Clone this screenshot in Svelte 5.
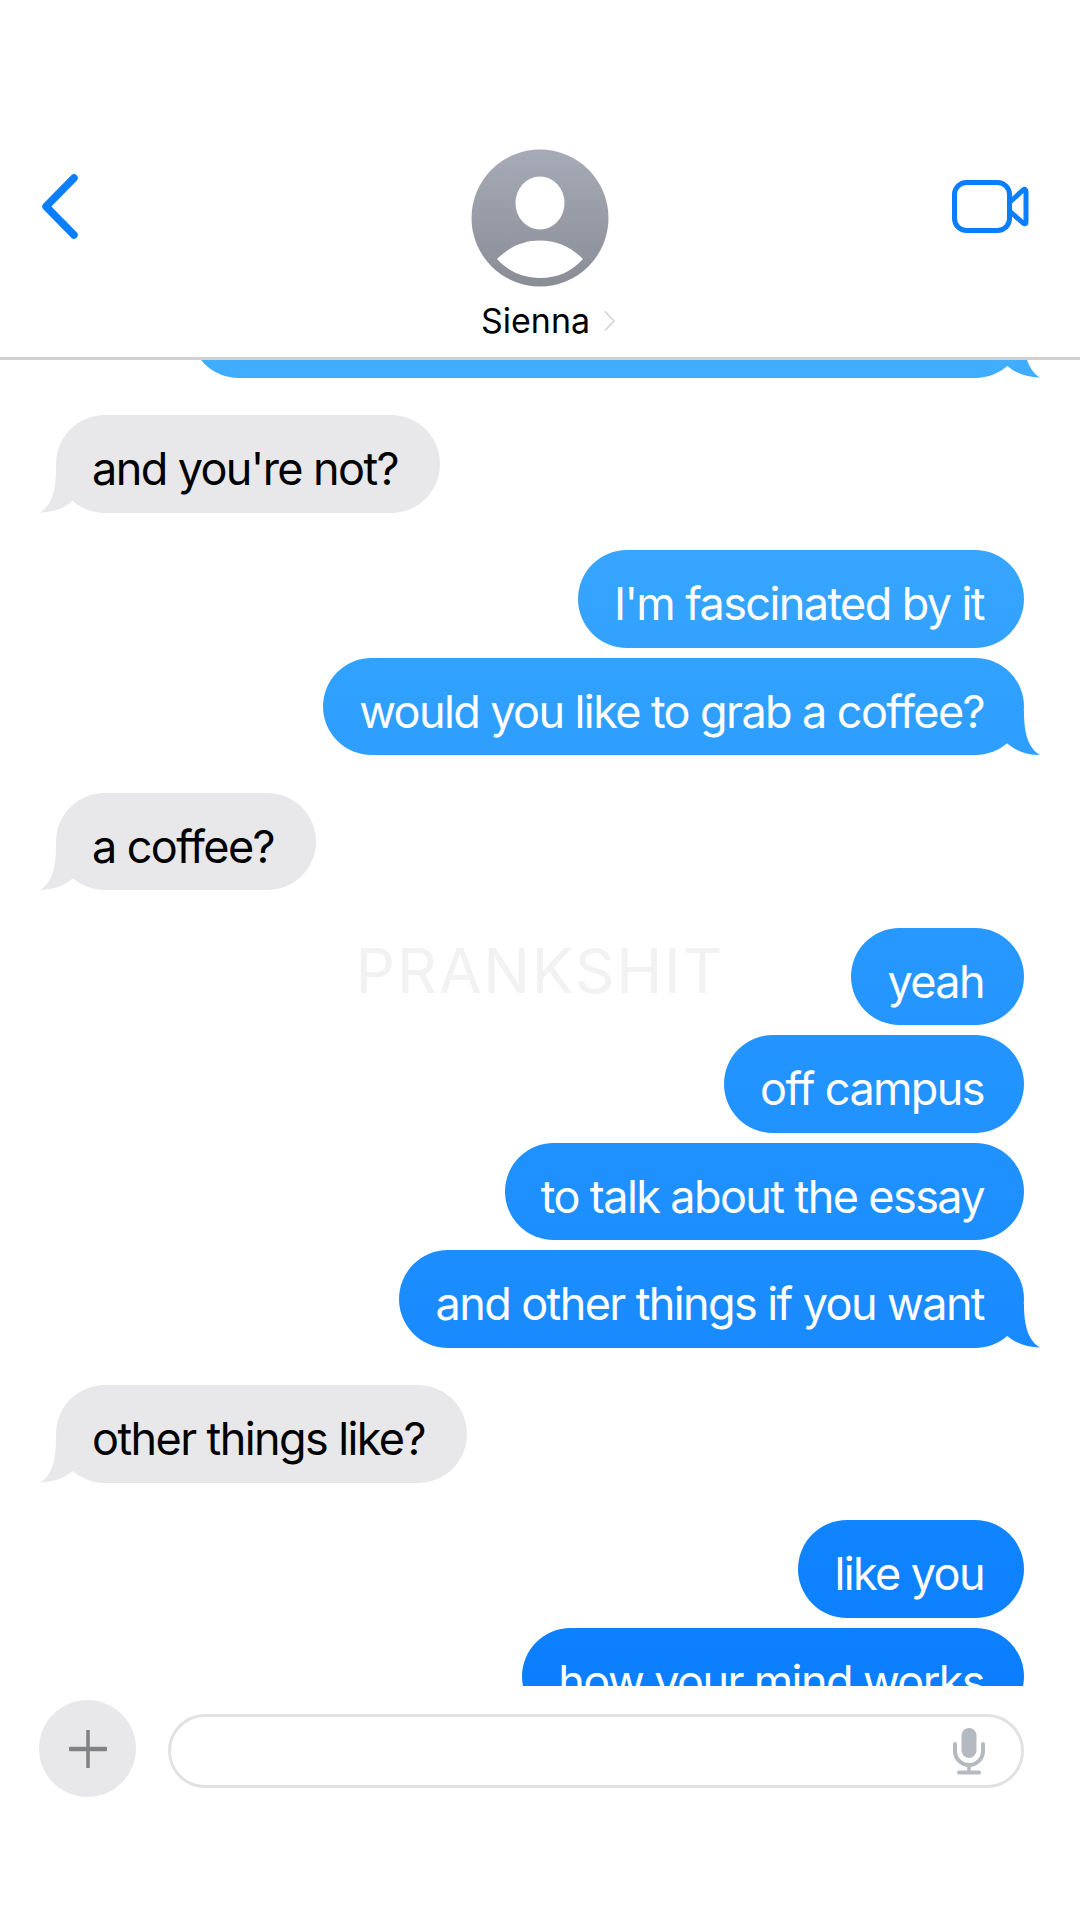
<script>
  const messages = [
    { id: 0, from: 'me', text: '\u00a0', width: 834, tail: true },
    { id: 1, from: 'them', text: "and you're not?", tail: true },
    { id: 2, from: 'me', text: "I'm fascinated by it" },
    { id: 3, from: 'me', text: 'would you like to grab a coffee?', tail: true },
    { id: 4, from: 'them', text: 'a coffee?', tail: true },
    { id: 5, from: 'me', text: 'yeah' },
    { id: 6, from: 'me', text: 'off campus' },
    { id: 7, from: 'me', text: 'to talk about the essay' },
    { id: 8, from: 'me', text: 'and other things if you want', tail: true },
    { id: 9, from: 'them', text: 'other things like?', tail: true },
    { id: 10, from: 'me', text: 'like you' },
    { id: 11, from: 'me', text: 'how your mind works' }
  ];
</script>

<div class="page">
  <header class="header">
    <svg class="back" width="44" height="70" viewBox="0 0 44 70" aria-label="Back">
      <path d="M36 6 L8 34.500 L36 63" fill="none" stroke="#0a7eff" stroke-width="7.500" stroke-linecap="round" stroke-linejoin="round" />
    </svg>
    <div class="contact">
      <svg class="avatar" width="138" height="138" viewBox="0 0 138 138">
        <defs>
          <linearGradient id="av" x1="0" y1="0" x2="0" y2="1">
            <stop offset="0" stop-color="#a6abb7" />
            <stop offset="1" stop-color="#8a8d96" />
          </linearGradient>
        </defs>
        <circle cx="69" cy="69" r="68.5" fill="url(#av)" />
        <ellipse cx="69" cy="54" rx="24.5" ry="26.5" fill="#fff" />
        <path d="M26 110 C38 98 52 91.500 69 91.500 C86 91.500 100 98 112 110 C100 123 86 129 69 129 C52 129 38 123 26 110 Z" fill="#fff" />
      </svg>
      <div class="name-row">
        <span class="name">Sienna</span>
        <svg width="13" height="22" viewBox="0 0 13 22"><path d="M2 1.500 L11 11 L2 20.500" fill="none" stroke="#d6d6d8" stroke-width="1.800" /></svg>
      </div>
    </div>
    <svg class="video" width="80" height="56" viewBox="0 0 80 56" aria-label="Video call">
      <rect x="4.500" y="4.500" width="55" height="48" rx="12" fill="none" stroke="#0a7eff" stroke-width="5" />
      <path d="M59.500 24.500 L73 12 Q76 10 76 14 L76 44 Q76 47 73 45 L59.500 33" fill="none" stroke="#0a7eff" stroke-width="5" stroke-linejoin="round" />
    </svg>
  </header>

  <main class="chat">
    <div class="list">
      {#each messages as m, i (m.id)}
        <div class="row {m.from}" class:first={i > 0 && messages[i - 1].from !== m.from}>
          <div class="bubble" style={m.width ? `width:${m.width}px` : undefined}>
            <span>{m.text}</span>
            {#if m.tail}<i class="tail"></i>{/if}
          </div>
        </div>
      {/each}
    </div>
    <div class="watermark">PRANKSHIT</div>
  </main>

  <footer class="composer">
    <button class="plus" aria-label="Add">
      <svg width="38" height="38" viewBox="0 0 38 38">
        <path d="M19 1 V37" stroke="#808286" stroke-width="3.500" stroke-linecap="round" />
        <path d="M1 19 H37" stroke="#808286" stroke-width="4.500" stroke-linecap="round" />
      </svg>
    </button>
    <div class="field">
      <svg width="34" height="48" viewBox="0 0 34 48" aria-label="Dictate">
        <rect x="9.500" y="1" width="15" height="30" rx="7.500" fill="#b5b9c2" />
        <path d="M3 17 V24 A14 14 0 0 0 31 24 V17" fill="none" stroke="#b5b9c2" stroke-width="4" stroke-linecap="round" />
        <path d="M17 38 V45" stroke="#b5b9c2" stroke-width="3.500" />
        <path d="M7 45.500 H27" stroke="#b5b9c2" stroke-width="4" stroke-linecap="round" />
      </svg>
    </div>
  </footer>
</div>

<style>
  :global(body) {
    margin: 0;
    background: #fff;
  }
  .page {
    width: 1080px;
    height: 1920px;
    display: flex;
    flex-direction: column;
    overflow: hidden;
    background: #fff;
    font-family: Inter, "Liberation Sans", sans-serif;
  }
  .header {
    box-sizing: border-box;
    flex: none;
    height: 360px;
    display: grid;
    grid-template-columns: 1fr auto 1fr;
    align-items: start;
    padding: 0 48px 0 38px;
    border-bottom: 3px solid #d0d0d0;
  }
  .back {
    display: block;
    margin-top: 172px;
  }
  .contact {
    display: flex;
    flex-direction: column;
    align-items: center;
    padding-top: 149px;
    margin-left: 10px;
  }
  .avatar {
    display: block;
  }
  .name-row {
    display: flex;
    align-items: center;
    gap: 13px;
    margin-top: 9px;
    margin-left: 17px;
  }
  .name {
    font-size: 34px;
    line-height: 50px;
    color: #000;
  }
  .video {
    display: block;
    justify-self: end;
    margin-top: 178px;
    margin-right: 2px;
  }
  .chat {
    position: relative;
    flex: none;
    height: 1326px;
    overflow: hidden;
  }
  .list {
    display: flex;
    flex-direction: column;
    gap: 10px;
    margin-top: -80px;
    padding: 0 56px;
  }
  .row {
    display: flex;
  }
  .row.first {
    margin-top: 27.5px;
  }
  .row.me {
    justify-content: flex-end;
  }
  .bubble {
    position: relative;
    box-sizing: border-box;
    height: 97.5px;
    border-radius: 49px;
    padding: 0 40px 0 36px;
    font-size: 45px;
    line-height: 107px;
    letter-spacing: -1.600px;
    white-space: nowrap;
  }
  .me .bubble {
    color: #fff;
    background: linear-gradient(#45b0ff 280px, #30a0ff 700px, #1a8cff 1300px, #0a7eff 1690px) fixed;
  }
  .them .bubble {
    color: #000;
    background: #e8e8ea;
    padding-left: 36px;
    padding-right: 42px;
  }
  .tail {
    position: absolute;
    bottom: 0;
    width: 36px;
    height: 44px;
  }
  .me .tail {
    right: -16px;
    background: linear-gradient(#45b0ff 280px, #30a0ff 700px, #1a8cff 1300px, #0a7eff 1690px) fixed;
    clip-path: path("M0 0 H20 C20 20 23 36 36 44 C24 44 12 40 4 33 L0 30 Z");
  }
  .them .tail {
    left: -16px;
    background: #e8e8ea;
    clip-path: path("M36 0 H16 C16 20 13 36 0 44 C12 44 24 40 32 33 L36 30 Z");
  }
  .watermark {
    position: absolute;
    left: 0;
    right: 0;
    top: 576px;
    text-align: center;
    font-size: 62px;
    line-height: 70px;
    letter-spacing: 1.800px;
    color: #f2f2f2;
    pointer-events: none;
  }
  .composer {
    flex: 1;
    display: flex;
    align-items: flex-start;
    gap: 32px;
    padding: 14px 56px 0 39px;
  }
  .plus {
    flex: none;
    width: 97px;
    height: 97px;
    padding: 0;
    border: 0;
    border-radius: 50%;
    background: #e8e8ea;
    display: flex;
    align-items: center;
    justify-content: center;
  }
  .field {
    box-sizing: border-box;
    flex: 1;
    height: 74px;
    margin-top: 14px;
    border: 3px solid #e2e2e2;
    border-radius: 37px;
    display: flex;
    align-items: center;
    justify-content: flex-end;
    padding-right: 35px;
  }
</style>
